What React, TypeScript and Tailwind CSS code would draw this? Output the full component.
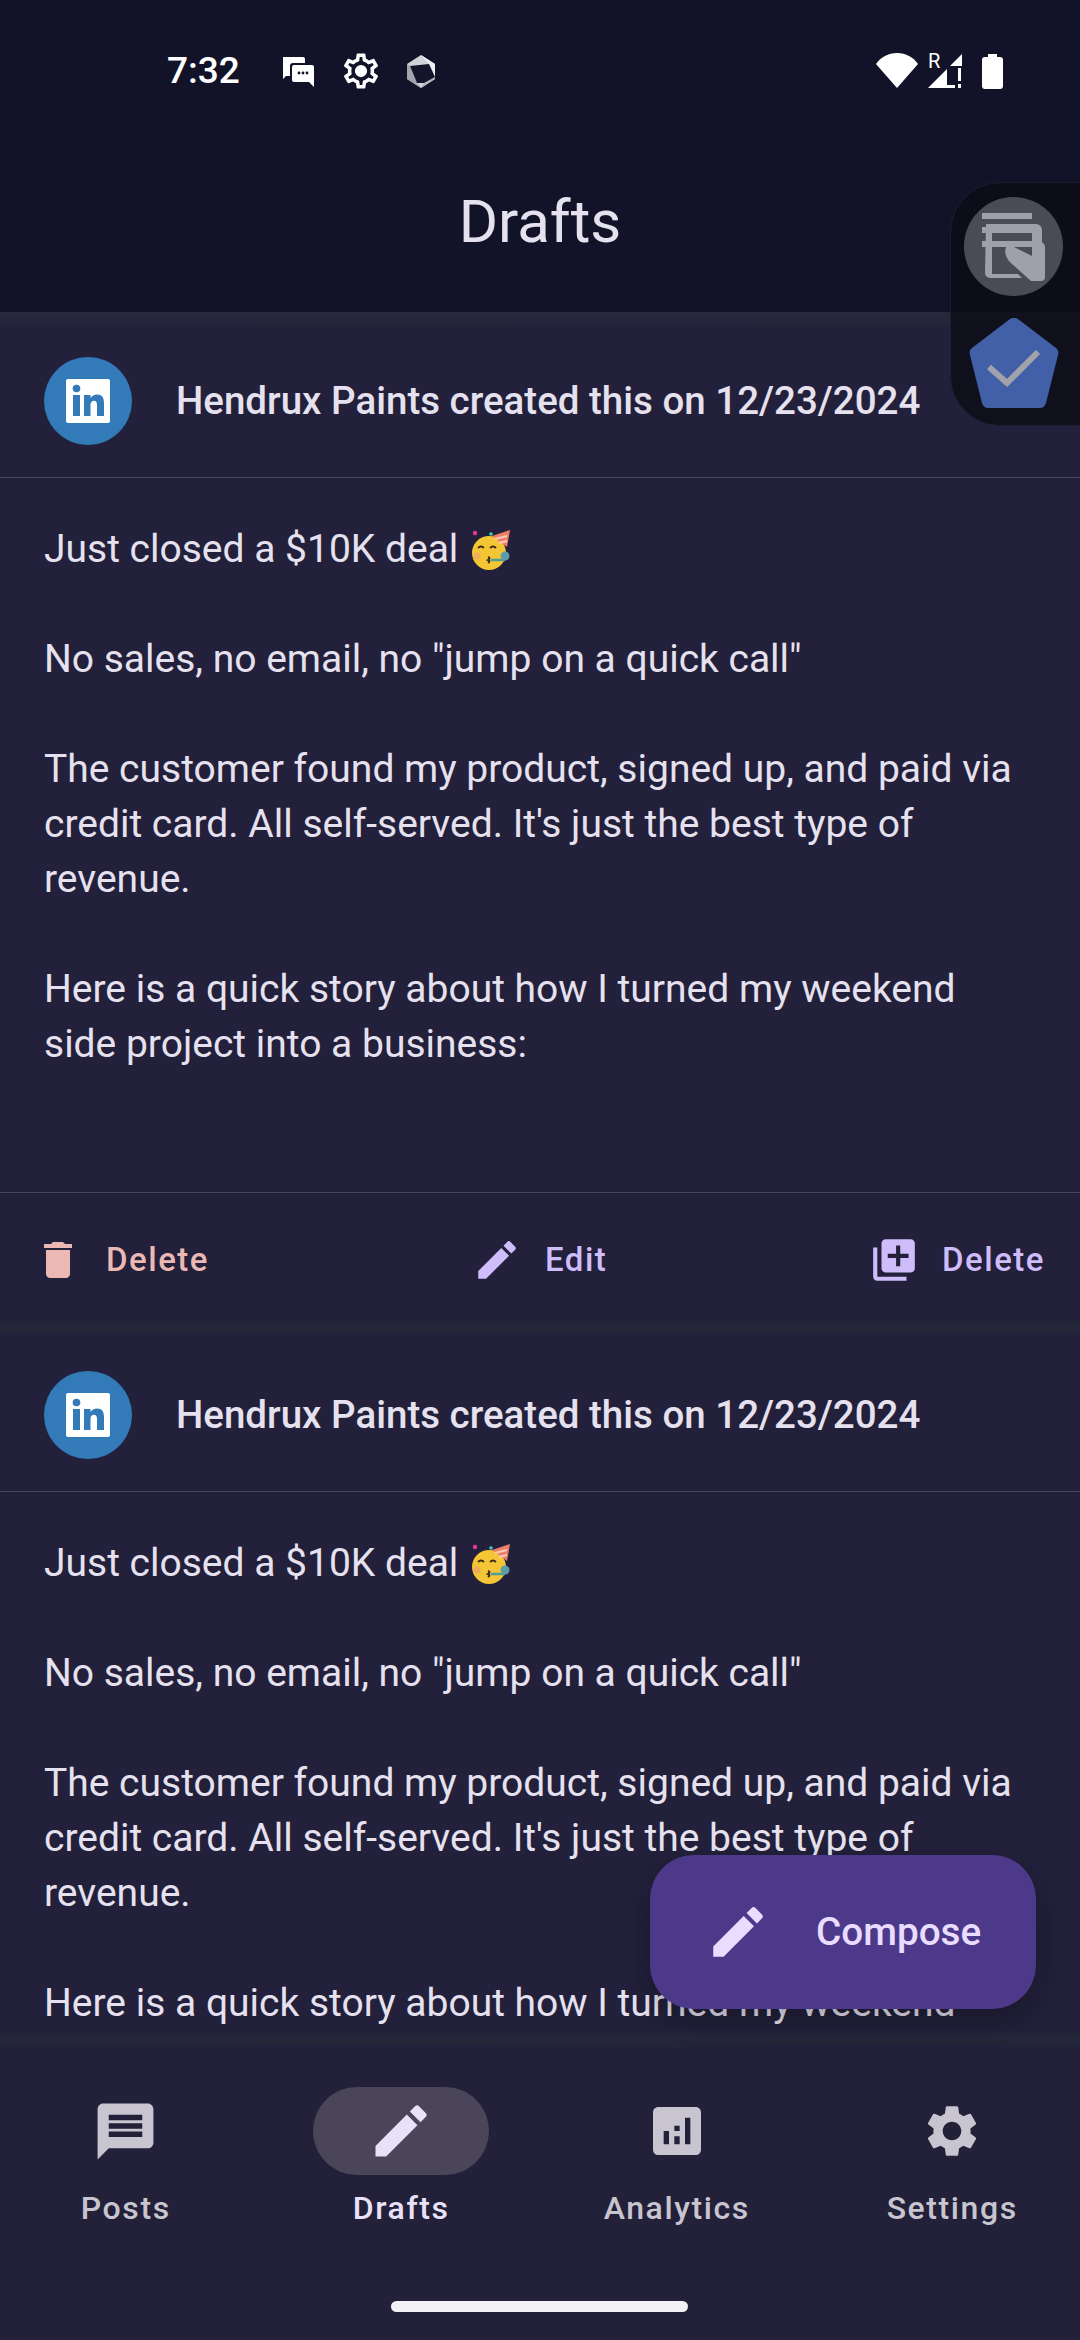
import { MdDelete, MdEdit, MdLibraryAdd, MdMessage, MdAnalytics, MdSettings } from "react-icons/md";

const font = { fontFamily: "Roboto, 'Liberation Sans', sans-serif" };

function ChatIcon() {
    return (
        <svg width="36" height="36" viewBox="0 0 36 36" fill="#fff">
            <path d="M3 4h20a2 2 0 0 1 2 2v4H13a3 3 0 0 0-3 3v10H6l-3 3z" />
            <path d="M14 12h18a2 2 0 0 1 2 2v20l-5-5H14a2 2 0 0 1-2-2V14a2 2 0 0 1 2-2z" />
            <circle cx="19" cy="20" r="1.4" fill="#121328" />
            <circle cx="23" cy="20" r="1.4" fill="#121328" />
            <circle cx="27" cy="20" r="1.4" fill="#121328" />
        </svg>
    );
}

function GearIcon() {
    return (
        <svg width="42" height="42" viewBox="0 0 24 24" fill="#fff">
            <path d="M19.43 12.98c.04-.32.07-.64.07-.98s-.03-.66-.07-.98l2.11-1.65c.19-.15.24-.42.12-.64l-2-3.46c-.12-.22-.39-.3-.61-.22l-2.49 1c-.52-.4-1.08-.73-1.69-.98l-.38-2.65C14.46 2.18 14.25 2 14 2h-4c-.25 0-.46.18-.49.42l-.38 2.65c-.61.25-1.17.59-1.69.98l-2.49-1c-.23-.09-.49 0-.61.22l-2 3.46c-.13.22-.07.49.12.64l2.11 1.65c-.04.32-.07.65-.07.98s.03.66.07.98l-2.11 1.65c-.19.15-.24.42-.12.64l2 3.46c.12.22.39.3.61.22l2.49-1c.52.4 1.08.73 1.69.98l.38 2.65c.03.24.24.42.49.42h4c.25 0 .46-.18.49-.42l.38-2.65c.61-.25 1.17-.59 1.69-.98l2.49 1c.23.09.49 0 .61-.22l2-3.46c.12-.22.07-.49-.12-.64l-2.11-1.65zM17.45 11.27c.04.31.05.52.05.73 0 .21-.02.43-.05.73l-.14 1.13.89.7 1.08.84-.7 1.21-1.27-.51-1.04-.42-.9.68c-.43.32-.84.56-1.25.73l-1.06.43-.16 1.13-.2 1.35h-1.4l-.19-1.35-.16-1.13-1.06-.43c-.43-.18-.83-.41-1.23-.71l-.91-.7-1.06.43-1.27.51-.7-1.21 1.08-.84.89-.7-.14-1.13c-.03-.31-.05-.54-.05-.74s.02-.43.05-.73l.14-1.13-.89-.7-1.08-.84.7-1.21 1.27.51 1.04.42.9-.68c.43-.32.84-.56 1.25-.73l1.06-.43.16-1.13.2-1.35h1.39l.19 1.35.16 1.13 1.06.43c.43.18.83.41 1.23.71l.91.7 1.06-.43 1.27-.51.7 1.21-1.07.85-.89.7.14 1.13zM12 8.500a3.500 3.500 0 1 0 0 7 3.500 3.500 0 0 0 0-7z" />
        </svg>
    );
}

function HexIcon() {
    return (
        <svg width="28" height="33" viewBox="0 0 28 33">
            <path d="M14 0 28 9v15l-14 9-14-9V9z" fill="#d2d3da" />
            <path d="M0 9l3 2 7 17 4 5-14-9z" fill="#a3a4ae" />
            <path d="M14 0l14 9v13l-6-13z" fill="#eeeff3" />
            <path d="M17 28l11-6v2l-14 9z" fill="#b4b5be" />
            <path d="M3 11 22 9l6 13-11 6h-7z" fill="#14152b" />
        </svg>
    );
}

function WifiIcon() {
    return (
        <svg width="42" height="36" viewBox="0 0 42 36" fill="#fff">
            <path d="M0 11C5 4 12 0 21 0s16 4 21 11L21 35z" />
        </svg>
    );
}

function SignalIcon() {
    return (
        <svg width="36" height="34" viewBox="0 0 36 34" fill="#fff">
            <path d="M0 34 19 15v16h8v3z" />
            <path d="M22 12 34 0v12z" />
            <rect x="30" y="14" width="3" height="13" />
            <rect x="30" y="30" width="3" height="4" />
        </svg>
    );
}

function BatteryIcon() {
    return (
        <svg width="21" height="35" viewBox="0 0 21 35" fill="#fff">
            <path d="M6 0h9v3h3a3 3 0 0 1 3 3v26a3 3 0 0 1-3 3H3a3 3 0 0 1-3-3V6a3 3 0 0 1 3-3h3z" />
        </svg>
    );
}

function PartyFace() {
    return (
        <svg width="44" height="44" viewBox="0 0 44 44">
            <circle cx="19" cy="25" r="17" fill="#f4c534" />
            <path d="M22 8 40 2l-3 17z" fill="#ee7f66" />
            <path d="M25 11l12-3M29 15l8-2" stroke="#f7cdb8" strokeWidth="2" />
            <circle cx="5" cy="5" r="2.2" fill="#e23d93" />
            <circle cx="21" cy="6" r="1.8" fill="#46c8c0" />
            <path d="M8 20q3-3 6 0M20 20q3-3 6 0" stroke="#3c2a14" strokeWidth="1.8" fill="none" />
            <path d="M18 29q3 1 0 3q3 1 0 3" stroke="#3c2a14" strokeWidth="2" fill="none" />
            <path d="M21 32h14" stroke="#4d9d9a" strokeWidth="2.5" />
            <circle cx="35" cy="28" r="4.5" fill="#5c9ea8" />
            <circle cx="7" cy="28" r="3.5" fill="#ef9f6a" opacity="0.7" />
        </svg>
    );
}

function LinkedInAvatar() {
    return (
        <div className="w-[88px] h-[88px] rounded-full bg-[#327ab8] flex items-center justify-center shrink-0">
            <svg width="44" height="44" viewBox="0 0 44 44">
                <rect width="44" height="44" rx="2" fill="#fff" />
                <circle cx="10.5" cy="9.5" r="3.8" fill="#327ab8" />
                <rect x="7" y="16" width="7" height="21" fill="#327ab8" />
                <path d="M18 16h6.500v3c1.500-2.300 3.800-3.500 6.500-3.500 5 0 7 3.300 7 8.500v13h-7V26c0-2.500-.8-4.300-3-4.300-2.400 0-3.500 1.800-3.500 4.300v11h-6.500z" fill="#327ab8" />
            </svg>
        </div>
    );
}

function DraftCard({ first }: { first?: boolean }) {
    return (
        <div>
            {first ? (
                <div className="h-[18px] bg-gradient-to-b from-[#272a3b] to-[#22203a]" />
            ) : (
                <div className="h-[18px] -mt-[8px] mb-[8px] bg-gradient-to-b from-[#22203a] via-[#252838] to-[#22203a]" />
            )}
            <div className="h-[148px] flex items-center pl-[44px] pb-[6px] gap-[44px] border-b border-[#47465a]">
                <LinkedInAvatar />
                <span className="text-[38.500px] font-medium text-[#e6e1ee] whitespace-nowrap">Hendrux Paints created this on 12/23/2024</span>
            </div>
            <div className="h-[715px] pt-[44px] pl-[44px] pr-[60px] text-[39px] leading-[55px] text-[#e6e1ee] border-b border-[#47465a]">
                <p className="mb-[55px] flex items-center gap-[12px]">Just closed a $10K deal <PartyFace /></p>
                <p className="mb-[55px]">No sales, no email, no "jump on a quick call"</p>
                <p className="mb-[55px]">The customer found my product, signed up, and paid via credit card. All self-served. It's just the best type of revenue.</p>
                <p>Here is a quick story about how I turned my weekend side project into a business:</p>
            </div>
            <div className="h-[133px] flex items-center pl-[34px] pr-[35px] text-[33px] font-medium tracking-[1.5px]">
                <div className="w-[438px] flex items-center gap-[24px] text-[#ecb8b3]">
                    <MdDelete size={48} />
                    <span>Delete</span>
                </div>
                <div className="flex items-center gap-[23px] text-[#cfbcfa]">
                    <MdEdit size={50} />
                    <span>Edit</span>
                </div>
                <div className="flex items-center gap-[23px] text-[#cfbcfa] ml-auto">
                    <MdLibraryAdd size={50} />
                    <span>Delete</span>
                </div>
            </div>
        </div>
    );
}

function NavItem({ label, active, children }: { label: string; active?: boolean; children: React.ReactNode }) {
    return (
        <div className="flex flex-col items-center w-[275.500px] shrink-0">
            <div className={`w-[176px] h-[88px] rounded-full flex items-center justify-center ${active ? "bg-[#4a4558] text-[#e9e1f8]" : "text-[#c8c5d0]"}`}>
                {children}
            </div>
            <span className={`mt-[9px] text-[32px] font-medium tracking-[1.6px] ${active ? "text-[#e9e1f8]" : "text-[#c8c5d0]"}`}>{label}</span>
        </div>
    );
}

export default function App() {
    return (
        <div className="relative w-[1080px] h-[2340px] overflow-hidden flex flex-col bg-[#22203a]" style={font}>
            <header className="h-[312px] shrink-0 bg-[#121328] flex flex-col">
                <div className="h-[142px] flex items-center pl-[167px] pr-[77px]">
                    <span className="text-[37px] text-white font-medium">7:32</span>
                    <div className="flex items-center ml-[40px]">
                        <ChatIcon />
                        <div className="ml-[24px]"><GearIcon /></div>
                        <div className="ml-[25px]"><HexIcon /></div>
                    </div>
                    <div className="flex items-center ml-auto">
                        <WifiIcon />
                        <div className="relative ml-[10px]">
                            <span className="absolute -top-[3px] left-0 text-[20px] leading-[20px] text-white">R</span>
                            <SignalIcon />
                        </div>
                        <div className="ml-[18px]"><BatteryIcon /></div>
                    </div>
                </div>
                <h1 className="text-center text-[60px] text-[#e6e1ee] leading-[80px] mt-[40px]">Drafts</h1>
            </header>

            <main className="flex-1 overflow-hidden">
                <DraftCard first />
                <DraftCard />
            </main>

            <nav className="h-[310px] shrink-0 bg-[#222139] relative">
                <div className="h-[18px] bg-gradient-to-b from-[#22203a] via-[#252838] to-[#222139]" />
                <div className="flex pt-[39px] -ml-[12px]">
                    <NavItem label="Posts"><MdMessage size={67} /></NavItem>
                    <NavItem label="Drafts" active><MdEdit size={68} /></NavItem>
                    <NavItem label="Analytics"><MdAnalytics size={64} /></NavItem>
                    <NavItem label="Settings"><MdSettings size={62} /></NavItem>
                </div>
                <div className="absolute bottom-[28px] left-[391px] w-[297px] h-[11px] rounded-full bg-[#f2f1f5]" />
            </nav>

            {/* compose fab */}
            <div className="absolute left-[650px] top-[1855px] w-[386px] h-[154px] rounded-[44px] bg-[#4d398a] flex items-center pl-[55px] gap-[45px] text-[#e9ddff] shadow-[0_12px_24px_rgba(0,0,0,0.25)]">
                <MdEdit size={66} />
                <span className="text-[38.700px] font-medium">Compose</span>
            </div>

            {/* floating side panel */}
            <div className="absolute left-[950px] top-[182px] w-[140px] h-[244px] rounded-l-[50px] bg-[#0d0d16]/80 border border-[#1e1e2e]">
                <div className="absolute left-[13px] top-[14px] w-[99px] h-[99px] rounded-full bg-[#4a4b57] flex items-center justify-center">
                    <svg width="66" height="70" viewBox="0 0 66 70">
                        <rect x="1" y="1" width="50" height="6" fill="#a0a0aa" />
                        <rect x="1" y="15" width="50" height="6" fill="#a0a0aa" />
                        <rect x="1" y="29" width="50" height="6" fill="#a0a0aa" />
                        <path d="M5 12h50a6 6 0 0 1 6 6v22l-4-2-6-3V20H11v42h26l4 4H9a5 5 0 0 1-5-5z" fill="#a0a0aa" />
                        <path d="M27 32l24 12V30h8a5 5 0 0 1 5 5v30a4 4 0 0 1-4 4H50L31 52c-7-6-9-14-4-20z" fill="#a0a0aa" />
                    </svg>
                </div>
                <svg className="absolute left-[17px] top-[134px]" width="92" height="92" viewBox="0 0 92 92">
                    <path d="M46 1c2 0 3 .5 4 1l38 29c2 1.500 3 4 2 7L78 86c-1 3-3 5-6 5H20c-3 0-5-2-6-5L2 38c-1-3 0-5.500 2-7L42 2c1-.5 2-1 4-1z" fill="#4160a8" />
                    <path d="M21 50l18 16 31-31" stroke="#a2a2aa" strokeWidth="6" fill="none" />
                </svg>
            </div>
        </div>
    );
}
